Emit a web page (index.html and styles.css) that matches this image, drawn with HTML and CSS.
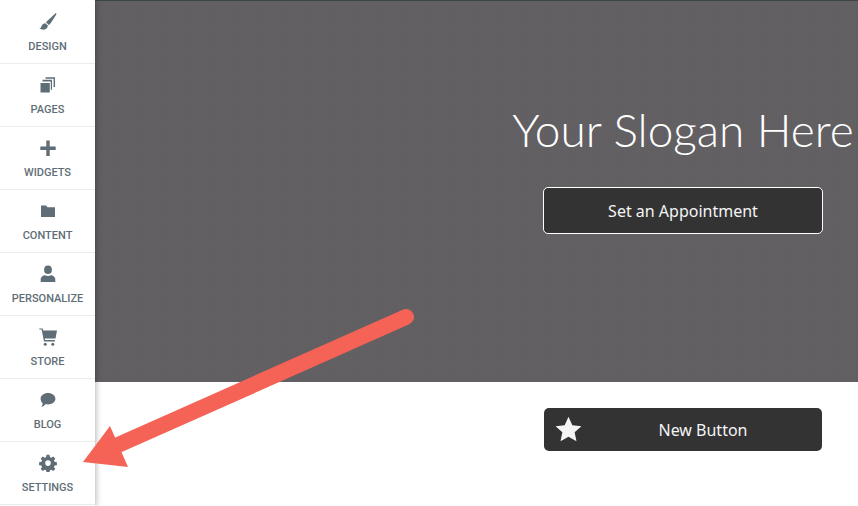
FILE: index.html
```html
<!DOCTYPE html>
<html>

<head>
    <title>Site Editor</title>
    <link rel="stylesheet" href="styles.css">
</head>

<body>
    <!-- sidebar -->
    <div class="sidebar">
        <a class="side-item" href="#">
            <svg class="side-icon" viewBox="0 0 18 18"><path d="M16.300 .4c.7-.3 1.300.3 1 1L11.800 9.900c-.6.9-1.300 1.500-2.100 2L7 9.300c.5-.8 1.100-1.500 2-2.100zM6.400 10.200l2.500 2.400c-.2 2.400-1.900 4.100-4.400 4.100-1.600 0-3-.5-4.200-1.400 1.500-.2 1.800-.7 2.200-2 .5-1.800 1.900-3 3.900-3.100z"/></svg>
            <span>Design</span>
        </a>
        <a class="side-item" href="#">
            <svg class="side-icon" viewBox="0 0 18 18"><path d="M1.500 7h9.300v9.500H1.500zM3.500 5.500V3.800H13v10h-1.200V5.500zM6.500 2.700V1.200H16V11h-1.400V2.700z"/></svg>
            <span>Pages</span>
        </a>
        <a class="side-item" href="#">
            <svg class="side-icon" viewBox="0 0 18 18"><path d="M7.300 1.500h3.400v6h6v3.400h-6v6H7.300v-6h-6V7.500h6z"/></svg>
            <span>Widgets</span>
        </a>
        <a class="side-item" href="#">
            <svg class="side-icon" viewBox="0 0 18 18"><path d="M2 3.500h5l1.500 1.800H16v9.700H2z"/></svg>
            <span>Content</span>
        </a>
        <a class="side-item" href="#">
            <svg class="side-icon" viewBox="0 0 18 18"><ellipse cx="9" cy="4.800" rx="3.900" ry="4.300"/><path d="M1.700 17v-2.500c0-2.600 2.400-4.200 4.300-4.200.9.500 1.900.8 3 .8s2.100-.3 3-.8c1.900 0 4.300 1.600 4.300 4.200V17z"/></svg>
            <span>Personalize</span>
        </a>
        <a class="side-item" href="#">
            <svg class="side-icon" viewBox="0 0 18 18"><path d="M.3 .4h3.300l.6 2H18l-1.500 8H5.700l.4 1.700h9.800v1.300H5l-2.400-12H.3z"/><circle cx="6.200" cy="16.300" r="1.500"/><circle cx="13.800" cy="16.300" r="1.500"/></svg>
            <span>Store</span>
        </a>
        <a class="side-item" href="#">
            <svg class="side-icon" viewBox="0 0 18 18"><path d="M9 2c4.100 0 7.400 2.500 7.400 5.700s-3.300 5.700-7.400 5.700c-.8 0-1.500-.1-2.200-.3C5.600 14.600 3.900 15.700 2.400 16c.7-1 1.200-2.200 1.300-3.700C2.400 11.200 1.600 9.600 1.600 7.700 1.600 4.500 4.900 2 9 2z"/></svg>
            <span>Blog</span>
        </a>
        <a class="side-item" href="#">
            <svg class="side-icon" viewBox="0 0 18 18"><path fill-rule="evenodd" d="M7.500 .8h3l.4 2.300 1.300.6 2-1.300 2.100 2.100-1.300 2 .6 1.300 2.300.4v3l-2.300.4-.6 1.300 1.300 2-2.100 2.100-2-1.300-1.300.6-.4 2.300h-3l-.4-2.300-1.300-.6-2 1.300-2.100-2.100 1.300-2-.6-1.300-2.300-.4v-3l2.300-.4.6-1.300-1.300-2 2.100-2.100 2 1.300 1.300-.6zM9 6.300a2.800 2.800 0 1 0 0 5.600 2.800 2.800 0 0 0 0-5.600z"/></svg>
            <span>Settings</span>
        </a>
    </div>

    <!-- page being edited -->
    <div class="main">
        <div class="hero">
            <h1>Your Slogan Here</h1>
            <a class="btn btn-outline" href="#">Set an Appointment</a>
        </div>
        <div class="below">
            <a class="btn btn-star" href="#">
                <svg class="star" viewBox="0 0 26 26"><path d="M13 .8l3.700 8 8.700 1-6.500 5.900 1.800 8.600L13 20l-7.700 4.300 1.800-8.600L.6 9.800l8.700-1z"/></svg>
                New Button
            </a>
        </div>
    </div>

    <!-- red arrow drawn over the screenshot -->
    <svg class="arrow" viewBox="0 0 858 506">
        <path class="arrow-line" d="M406 317L118 445"/>
        <path class="arrow-head" d="M83 462L110 426L128 467z"/>
    </svg>
</body>

</html>
```

FILE: styles.css
```css
html,
body {
    margin: 0;
    height: 100%;
    overflow: hidden;
}

body {
    display: flex;
    background-color: white;
    font-family: "Open Sans", sans-serif;
}

/* sidebar */
.sidebar {
    width: 95px;
    flex-shrink: 0;
    padding-top: 1px;
    background-color: white;
    box-shadow: 1px 0 6px rgba(0, 0, 0, 0.3);
    position: relative;
    z-index: 2;
}

.side-item {
    height: 62px;
    border-bottom: 1px solid #ececec;
    display: flex;
    flex-direction: column;
    align-items: center;
    color: #5f6e76;
    text-decoration: none;
}

.side-icon {
    width: 18px;
    height: 18px;
    margin-top: 12px;
    fill: #5f6e76;
}

.side-item span {
    margin-top: 10px;
    font-family: Roboto, sans-serif;
    font-size: 11px;
    line-height: 12px;
    font-weight: 500;
    text-transform: uppercase;
}

/* main area */
.main {
    flex: 1;
    display: flex;
    flex-direction: column;
}

.hero {
    height: 381px;
    padding-left: 413px;
    display: flex;
    flex-direction: column;
    align-items: center;
    border-top: 1px solid #3c4448;
    background-color: #615f62;
    background-image: repeating-conic-gradient(rgba(255, 255, 255, 0.012) 0 25%, rgba(0, 0, 0, 0.012) 0 50%);
    background-size: 3px 3px;
}

.hero h1 {
    margin: 99px 0 0;
    font-family: Lato, sans-serif;
    font-size: 46px;
    line-height: 60px;
    font-weight: 300;
    color: white;
    white-space: nowrap;
}

.btn {
    box-sizing: border-box;
    display: flex;
    align-items: center;
    justify-content: center;
    background-color: #333333;
    color: #f5f5f5;
    font-family: "Noto Sans", sans-serif;
    font-size: 16px;
    text-decoration: none;
    position: relative;
}

.btn-outline {
    width: 280px;
    height: 47px;
    margin-top: 27px;
    border: 1px solid white;
    border-radius: 5px;
}

.below {
    padding: 26px 0 0 413px;
    display: flex;
    justify-content: center;
}

.btn-star {
    width: 278px;
    height: 43px;
    border-radius: 5px;
    padding-left: 40px;
}

.star {
    position: absolute;
    left: 11px;
    top: 8px;
    width: 27px;
    height: 27px;
    fill: #f5f5f5;
}

/* arrow overlay */
.arrow {
    position: absolute;
    left: 0;
    top: 0;
    width: 858px;
    height: 506px;
    z-index: 3;
    pointer-events: none;
}

.arrow-line {
    fill: none;
    stroke: #f56356;
    stroke-width: 16px;
    stroke-linecap: round;
}

.arrow-head {
    fill: #f56356;
}
```
